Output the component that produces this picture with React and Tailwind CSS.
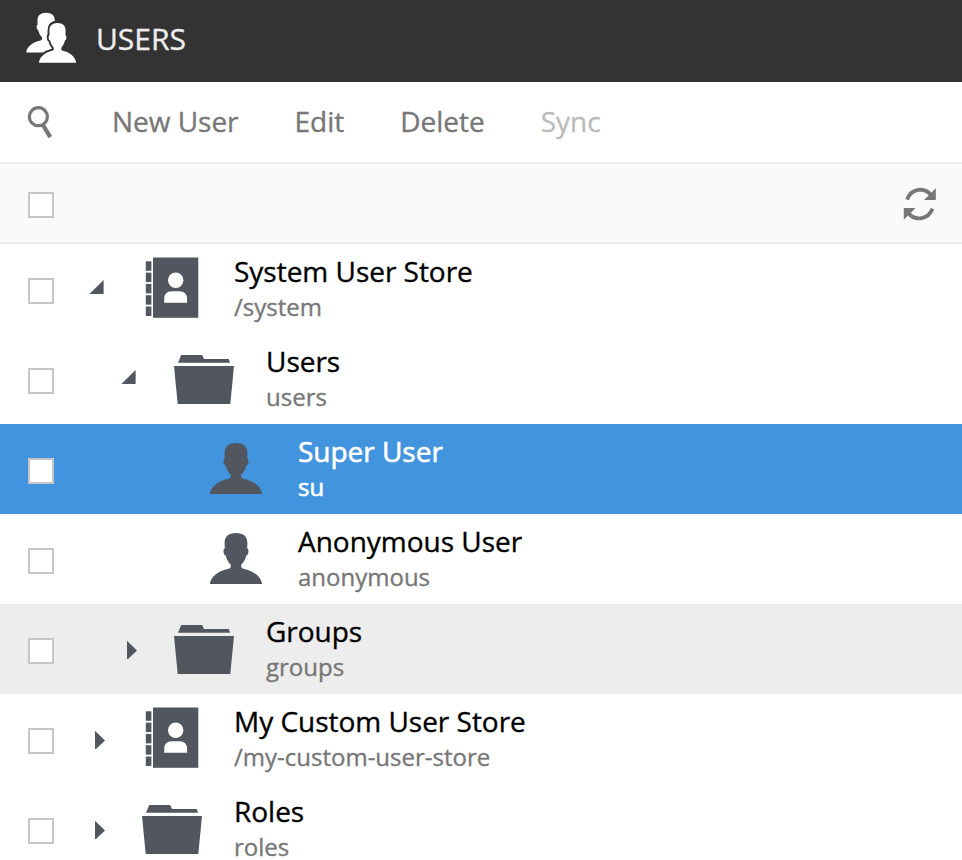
const PERSON =
  'M32 7 C39.5 7 43.4 10.5 43.4 17 L43.2 22.6 C44.6 23 44.7 25 44.3 26.8 C44 28.6 43.3 29.2 42.4 29.4 C41.6 32.8 39.6 36.2 37.3 38.8 L37.3 40.5 C37.4 42 38.2 42.4 39.5 42.7 C50 45 57 50.5 58.2 58 L5.8 58 C7 50.5 14 45 24.5 42.7 C25.8 42.4 26.6 42 26.7 40.5 L26.7 38.8 C24.4 36.2 22.4 32.8 21.6 29.4 C20.7 29.2 20 28.6 19.7 26.8 C19.3 25 19.4 23 20.8 22.6 L20.6 17 C20.6 10.5 24.5 7 32 7 Z';

function PersonIcon() {
  return (
    <svg className="size-16" viewBox="0 0 64 64" fill="#52575f">
      <path d={PERSON} />
    </svg>
  );
}

function FolderIcon() {
  return (
    <svg className="size-16" viewBox="0 0 64 64" fill="#52575f">
      <path d="M9.2 9 H30.2 L32 13 H56.8 L58 16.8 H6 Z" />
      <path d="M2 20 H62 L58.3 58 H5.7 Z" />
    </svg>
  );
}

function StoreIcon() {
  return (
    <svg className="size-16" viewBox="0 0 64 64" fill="#52575f">
      <rect x="13" y="1.5" width="45.3" height="60.3" />
      {[5.3, 16.6, 27.9, 39.2, 50.5].map((y) => (
        <rect key={y} x="5.8" y={y} width="5.6" height="9.5" />
      ))}
      <circle cx="35.7" cy="24.3" r="7.7" fill="#fff" />
      <path d="M24.2 46.8 V43 Q24.2 35.2 32 35.2 H39.3 Q47.1 35.2 47.1 43 V46.8 Z" fill="#fff" />
    </svg>
  );
}

function UsersLogo() {
  return (
    <svg className="h-[52px] w-[52px]" viewBox="0 0 52 52" fill="#fff">
      <clipPath id="back-person">
        <rect width="31" height="52" />
      </clipPath>
      <g clipPath="url(#back-person)">
        <path d={PERSON} transform="translate(-3.2 -4.8) scale(.76 .78)" />
      </g>
      <g transform="translate(9.8 5.5) scale(.71 .78)">
        <path d={PERSON} stroke="#333" strokeWidth="5.4" />
        <path d={PERSON} />
      </g>
    </svg>
  );
}

function SearchIcon() {
  return (
    <svg className="h-9 w-7" viewBox="0 0 28 36" fill="none" stroke="#777">
      <circle cx="11.4" cy="12.7" r="9" strokeWidth="3.2" />
      <path d="M16 21 L23.3 33.2" strokeWidth="4.2" />
    </svg>
  );
}

function RefreshIcon() {
  return (
    <svg className="size-9" viewBox="0 0 36 36">
      <g fill="none" stroke="#777" strokeWidth="3.9">
        <path d="M5.1 13.6 C9.2 2.4 22.5 0.6 29 9" />
        <path d="M30.5 22.6 C26.4 33.6 13.1 35.4 6.6 27.2" />
      </g>
      <path d="M33.8 2.2 V14 H22 Z M1.8 22 H13.6 L1.8 33.8 Z" fill="#777" />
    </svg>
  );
}

function Checkbox() {
  return <span className="h-[26px] w-[26px] shrink-0 border-2 border-[#c6c6c6] bg-white" />;
}

function Toggle({ state }) {
  return (
    <svg className="h-6 w-5 shrink-0" viewBox="0 0 20 24" fill="#52575f">
      {state === 'open' && <path d="M15.6 5 V19 H1.4 Z" />}
      {state === 'closed' && <path d="M7 5.7 L17 15.4 L7 25 Z" />}
    </svg>
  );
}

const ICONS = { store: StoreIcon, folder: FolderIcon, person: PersonIcon };
const INDENTS = ['pl-[34px]', 'pl-[66px]', 'pl-[98px]'];

const ROWS = [
  { name: 'System User Store', path: '/system', icon: 'store', level: 0, toggle: 'open' },
  { name: 'Users', path: 'users', icon: 'folder', level: 1, toggle: 'open' },
  { name: 'Super User', path: 'su', icon: 'person', level: 2, selected: true },
  { name: 'Anonymous User', path: 'anonymous', icon: 'person', level: 2 },
  { name: 'Groups', path: 'groups', icon: 'folder', level: 1, toggle: 'closed', hovered: true },
  { name: 'My Custom User Store', path: '/my-custom-user-store', icon: 'store', level: 0, toggle: 'closed' },
  { name: 'Roles', path: 'roles', icon: 'folder', level: 0, toggle: 'closed' },
];

function Row({ name, path, icon, level, toggle, selected, hovered }) {
  const Icon = ICONS[icon];
  const tone = selected
    ? 'bg-[#4294de] text-white [-webkit-text-stroke:0.6px]'
    : hovered
      ? 'bg-[#ededed] text-black'
      : 'bg-white text-black';
  return (
    <div className={`flex h-[90px] shrink-0 items-start pl-7 ${tone}`}>
      <span className="flex pt-[34px]">
        <Checkbox />
      </span>
      <div className={`flex items-start ${INDENTS[level]}`}>
        <span className="flex w-[52px] pt-[31px]">
          <Toggle state={toggle} />
        </span>
        <span className="w-[94px] pt-3">
          <Icon />
        </span>
        <div className="whitespace-nowrap pt-[7px]">
          <div className="text-[28px] leading-10 tracking-[-0.02px]">{name}</div>
          <div className={`pt-px text-[24px] leading-[30px] ${selected ? 'text-white' : 'text-[#777]'}`}>{path}</div>
        </div>
      </div>
    </div>
  );
}

export default function App() {
  return (
    <div className="flex h-[860px] w-[962px] flex-col overflow-hidden bg-white font-['Open_Sans',sans-serif] [-webkit-text-stroke:0.35px]">
      <header className="flex h-[82px] shrink-0 items-start bg-[#333] pl-[25px] pt-3 text-[#eee]">
        <UsersLogo />
        <h1 className="pl-[19px] pt-1 text-[30px] leading-[46px]">USERS</h1>
      </header>
      <nav className="flex h-[82px] shrink-0 items-center gap-14 border-b-2 border-[#ececec] pl-[27px] text-[28px] leading-10 tracking-[-0.02px] text-[#777]">
        <span className="w-[29px]">
          <SearchIcon />
        </span>
        <span className="pb-0.5">New User</span>
        <span className="pb-0.5">Edit</span>
        <span className="pb-0.5">Delete</span>
        <span className="pb-0.5 text-[#bbb]">Sync</span>
      </nav>
      <div className="flex h-20 shrink-0 items-start justify-between border-b-2 border-[#ececec] bg-[#fafafa] pl-7 pr-6">
        <span className="flex pt-7">
          <Checkbox />
        </span>
        <span className="pt-[22px]">
          <RefreshIcon />
        </span>
      </div>
      <main className="flex flex-col">
        {ROWS.map((row) => (
          <Row key={row.name} {...row} />
        ))}
      </main>
    </div>
  );
}
